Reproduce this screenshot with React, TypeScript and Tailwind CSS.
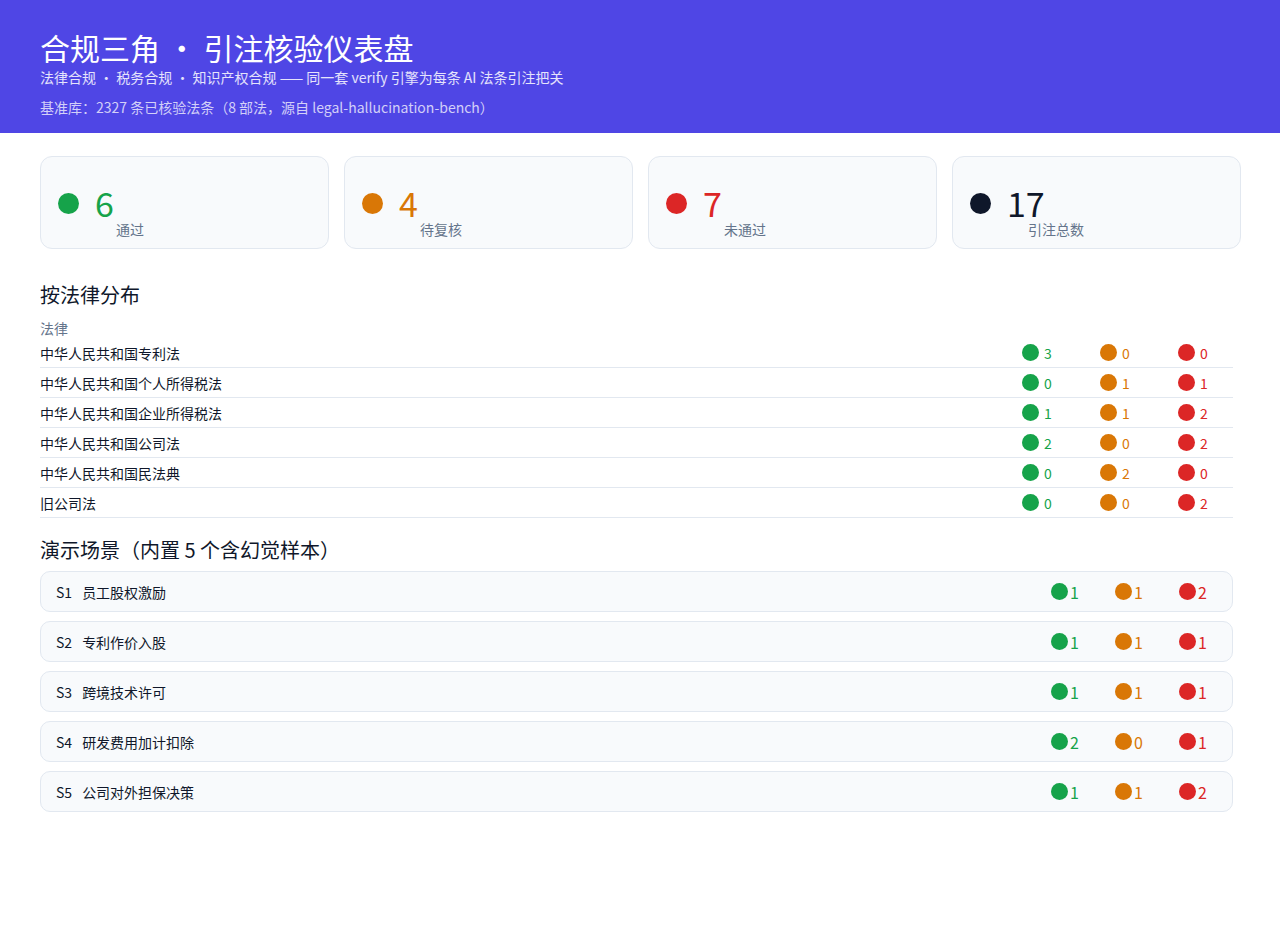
const font = "[font-family:'Noto_Sans_CJK_SC','Inter',sans-serif]";

const GREEN = "bg-[#16a34a]";
const AMBER = "bg-[#d97706]";
const RED = "bg-[#dc2626]";

const stats = [
  { value: "6", label: "通过", dot: GREEN, color: "text-[#16a34a]" },
  { value: "4", label: "待复核", dot: AMBER, color: "text-[#d97706]" },
  { value: "7", label: "未通过", dot: RED, color: "text-[#dc2626]" },
  { value: "17", label: "引注总数", dot: "bg-[#0f172a]", color: "text-[#0f172a]" },
];

const laws: [string, number, number, number][] = [
  ["中华人民共和国专利法", 3, 0, 0],
  ["中华人民共和国个人所得税法", 0, 1, 1],
  ["中华人民共和国企业所得税法", 1, 1, 2],
  ["中华人民共和国公司法", 2, 0, 2],
  ["中华人民共和国民法典", 0, 2, 0],
  ["旧公司法", 0, 0, 2],
];

const scenes: [string, string, number, number, number][] = [
  ["S1", "员工股权激励", 1, 1, 2],
  ["S2", "专利作价入股", 1, 1, 1],
  ["S3", "跨境技术许可", 1, 1, 1],
  ["S4", "研发费用加计扣除", 2, 0, 1],
  ["S5", "公司对外担保决策", 1, 1, 2],
];

function Dot({ className }: { className: string }) {
  return <span className={`inline-block h-[17px] w-[17px] shrink-0 rounded-full ${className}`} />;
}

export default function App() {
  return (
    <div className={`min-h-[940px] bg-white text-[#0f172a] ${font}`}>
      <header className="h-[133px] bg-[#4f46e5] px-10 pt-[26px] text-white">
        <h1 className="text-[30px] leading-[42px]">合规三角 · 引注核验仪表盘</h1>
        <p className="text-sm leading-[18px] text-white/85">
          法律合规 · 税务合规 · 知识产权合规 —— 同一套 verify 引擎为每条 AI 法条引注把关
        </p>
        <p className="mt-3 text-sm leading-[18px] text-white/75">
          基准库：2327 条已核验法条（8 部法，源自 legal-hallucination-bench）
        </p>
      </header>

      <main className="pl-10 pr-[39px] pt-[23px]">
        <section className="grid grid-cols-4 gap-[15px]">
          {stats.map((s) => (
            <div key={s.label} className="h-[93px] rounded-xl border border-[#e2e8f0] bg-[#f8fafc] px-[17px] pt-[28px]">
              <div className="flex items-center gap-4">
                <span className={`h-[21px] w-[21px] rounded-full ${s.dot}`} />
                <span className={`text-[34px] leading-9 ${s.color}`}>{s.value}</span>
              </div>
              <div className="ml-[58px] text-sm leading-4 text-[#64748b]">{s.label}</div>
            </div>
          ))}
        </section>

        <h2 className="mt-[32px] text-xl leading-7">按法律分布</h2>
        <div className="mr-2 mt-[9px]">
          <div className="text-sm leading-5 text-[#64748b]">法律</div>
          {laws.map(([name, a, b, c]) => (
            <div key={name} className="flex h-[30px] items-center border-b border-[#e2e8f0] text-sm">
              <span className="flex-1">{name}</span>
              <span className="flex w-[78px] items-center gap-[5px] text-[#16a34a]"><Dot className={GREEN} />{a}</span>
              <span className="flex w-[78px] items-center gap-[5px] text-[#d97706]"><Dot className={AMBER} />{b}</span>
              <span className="flex w-[55px] items-center gap-[5px] text-[#dc2626]"><Dot className={RED} />{c}</span>
            </div>
          ))}
        </div>

        <h2 className="mt-[18px] text-xl leading-7">演示场景（内置 5 个含幻觉样本）</h2>
        <div className="mr-2 mt-[7px] flex flex-col gap-[9px]">
          {scenes.map(([id, name, a, b, c]) => (
            <div key={id} className="flex h-[41px] items-center rounded-[10px] border border-[#e2e8f0] bg-[#f8fafc] pl-[15px] text-sm">
              <span className="mr-[10px]">{id}</span>
              <span className="flex-1">{name}</span>
              <span className="flex w-[64px] items-center gap-[2px] text-base text-[#16a34a]"><Dot className={GREEN} />{a}</span>
              <span className="flex w-[64px] items-center gap-[2px] text-base text-[#d97706]"><Dot className={AMBER} />{b}</span>
              <span className="flex w-[53px] items-center gap-[2px] text-base text-[#dc2626]"><Dot className={RED} />{c}</span>
            </div>
          ))}
        </div>
      </main>
    </div>
  );
}
